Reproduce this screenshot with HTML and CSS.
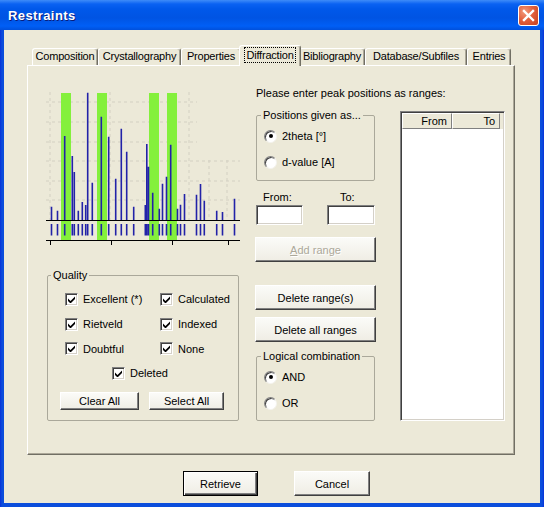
FILE: index.html
```html
<!DOCTYPE html>
<html lang="en">
<head>
    <meta charset="UTF-8">
    <title>Restraints</title>
    <link rel="stylesheet" href="styles.css">
</head>
<body>
    <div class="window">
        <div class="titlebar">
            <span class="title">Restraints</span>
            <span class="close">
                <svg width="13" height="13" viewBox="0 0 13 13"><path d="M2 2 L11 11 M11 2 L2 11" stroke="#fff" stroke-width="2.4" stroke-linecap="square"/></svg>
            </span>
        </div>
        <div class="client">
            <div class="tabs">
                <span class="tab t_comp">Composition</span>
                <span class="tab t_cryst">Crystallography</span>
                <span class="tab t_prop">Properties</span>
                <span class="tab active"><span class="focus">Diffraction</span></span>
                <span class="tab t_bib">Bibliography</span>
                <span class="tab t_db">Database/Subfiles</span>
                <span class="tab t_ent">Entries</span>
            </div>
            <div class="panel">
                <div class="left">
                    <svg class="chart" width="198" height="160" viewBox="44 88 198 160">
                        <g class="grid">
                            <path d="M50 92V220 M110 92V220 M189 92V220 M209 160V220 M227 160V220"/>
                            <path d="M46 102H197 M46 122H197 M46 142H197 M46 161H240 M46 181H240 M46 200H240"/>
                        </g>
                        <g fill="#84f03c">
                            <rect x="61" y="93" width="10" height="147"/>
                            <rect x="97" y="93" width="10" height="147"/>
                            <rect x="149" y="93" width="10" height="147"/>
                            <rect x="167" y="93" width="10" height="147"/>
                        </g>
                        <path class="peaks" d="M51.5 220V206.7 M57.5 220V210.7 M64.7 220V136 M72.3 220V156 M74.3 220V172 M78.3 220V210.7 M82.3 220V202 M85.7 220V205 M87.7 220V92.7 M92.3 220V182.7 M101.3 220V116.7 M108.7 220V136.7 M115.7 220V178.7 M121.3 220V128.7 M126.7 220V151.7 M133.7 220V206.7 M145.3 220V205 M146.8 220V144 M148.5 220V166.7 M152.7 220V192.7 M159.3 220V208.7 M162.5 220V183.7 M166.5 220V176.7 M170.7 220V144.7 M177.5 220V208.7 M180.5 220V204.7 M184.5 220V194 M196.5 220V194.7 M200.5 220V184 M204.3 220V200.7 M216.7 220V210.7 M222.5 220V212 M234.5 220V198.7"/>
                        <path class="peaks" d="M51.5 224V235.5 M57.5 224V235.5 M64.7 224V235.5 M72.3 224V235.5 M74.3 224V235.5 M78.3 224V235.5 M82.3 224V235.5 M85.7 224V235.5 M87.7 224V235.5 M92.3 224V235.5 M101.3 224V235.5 M108.7 224V235.5 M115.7 224V235.5 M121.3 224V235.5 M126.7 224V235.5 M133.7 224V235.5 M145.3 224V235.5 M146.8 224V235.5 M148.5 224V235.5 M152.7 224V235.5 M159.3 224V235.5 M162.5 224V235.5 M166.5 224V235.5 M170.7 224V235.5 M177.5 224V235.5 M180.5 224V235.5 M184.5 224V235.5 M196.5 224V235.5 M200.5 224V235.5 M204.3 224V235.5 M216.7 224V235.5 M222.5 224V235.5 M234.5 224V235.5"/>
                        <path class="axis" d="M46 220.5H240 M46 240.5H240 M50.5 240V245 M111.5 240V245 M172.5 240V245 M228.5 240V245"/>
                    </svg>
                    <fieldset class="group quality">
                        <legend>Quality</legend>
                        <div class="checks">
                            <label class="opt"><span class="cb"><svg width="7" height="7" viewBox="0 0 7 7"><polygon points="0,2.5 2.5,5 7,0.5 7,3 2.5,7.5 0,5"/></svg></span>Excellent (*)</label>
                            <label class="opt"><span class="cb"><svg width="7" height="7" viewBox="0 0 7 7"><polygon points="0,2.5 2.5,5 7,0.5 7,3 2.5,7.5 0,5"/></svg></span>Calculated</label>
                            <label class="opt"><span class="cb"><svg width="7" height="7" viewBox="0 0 7 7"><polygon points="0,2.5 2.5,5 7,0.5 7,3 2.5,7.5 0,5"/></svg></span>Rietveld</label>
                            <label class="opt"><span class="cb"><svg width="7" height="7" viewBox="0 0 7 7"><polygon points="0,2.5 2.5,5 7,0.5 7,3 2.5,7.5 0,5"/></svg></span>Indexed</label>
                            <label class="opt"><span class="cb"><svg width="7" height="7" viewBox="0 0 7 7"><polygon points="0,2.5 2.5,5 7,0.5 7,3 2.5,7.5 0,5"/></svg></span>Doubtful</label>
                            <label class="opt"><span class="cb"><svg width="7" height="7" viewBox="0 0 7 7"><polygon points="0,2.5 2.5,5 7,0.5 7,3 2.5,7.5 0,5"/></svg></span>None</label>
                            <label class="opt deleted"><span class="cb"><svg width="7" height="7" viewBox="0 0 7 7"><polygon points="0,2.5 2.5,5 7,0.5 7,3 2.5,7.5 0,5"/></svg></span>Deleted</label>
                        </div>
                        <div class="btnrow">
                            <button class="btn clear">Clear All</button>
                            <button class="btn select">Select All</button>
                        </div>
                    </fieldset>
                </div>
                <div class="right">
                    <p class="hint">Please enter peak positions as ranges:</p>
                    <div class="rrow">
                        <div class="mid">
                            <fieldset class="group">
                                <legend>Positions given as...</legend>
                                <div class="radios">
                                    <label class="opt"><span class="rb on"></span>2theta [°]</label>
                                    <label class="opt"><span class="rb"></span>d-value [A]</label>
                                </div>
                            </fieldset>
                            <div class="fromto">
                                <span class="lbl-from">From:</span>
                                <span class="lbl-to">To:</span>
                                <input class="field" type="text">
                                <input class="field" type="text">
                            </div>
                            <button class="btn wide add" disabled><u>A</u>dd range</button>
                            <button class="btn wide del">Delete range(s)</button>
                            <button class="btn wide delall">Delete all ranges</button>
                            <fieldset class="group logic">
                                <legend>Logical combination</legend>
                                <div class="radios">
                                    <label class="opt"><span class="rb on"></span>AND</label>
                                    <label class="opt"><span class="rb"></span>OR</label>
                                </div>
                            </fieldset>
                        </div>
                        <div class="list">
                            <div class="list_head">
                                <span class="col col_from">From</span>
                                <span class="col col_to">To</span>
                            </div>
                        </div>
                    </div>
                </div>
            </div>
            <div class="footer">
                <button class="btn default">Retrieve</button>
                <button class="btn cancel">Cancel</button>
            </div>
        </div>
    </div>
</body>
</html>
```

FILE: styles.css
```css
* {
    margin: 0;
    padding: 0;
    box-sizing: border-box;
}
body {
    width: 544px;
    height: 507px;
    overflow: hidden;
    font-family: "Liberation Sans", Arial, sans-serif;
    font-size: 11px;
    color: #000;
    background: #ece9d8;
}
.window {
    width: 544px;
    height: 507px;
    display: flex;
    flex-direction: column;
    background: linear-gradient(90deg, #0831d9 0, #0b4ddc 2px, #0b4ddc 542px, #0831d9 544px);
}
.titlebar {
    height: 30px;
    display: flex;
    align-items: center;
    justify-content: space-between;
    padding: 0 5px 0 8px;
    background: linear-gradient(#3e8cf8 0, #0a62f2 4px, #0058ea 9px, #0054e3 18px, #005ff6 26px, #0050dc 30px);
}
.title {
    color: #fff;
    font-weight: bold;
    font-size: 13px;
    letter-spacing: 0.4px;
    text-shadow: 1px 1px 0 #0a1c7a;
}
.close {
    width: 21px;
    height: 21px;
    margin-top: 1px;
    display: flex;
    align-items: center;
    justify-content: center;
    border: 1px solid #fff;
    border-radius: 3px;
    background: radial-gradient(circle at 30% 30%, #f39a7c 0, #e2613e 45%, #c6401c 100%);
}
.client {
    flex: 1;
    margin: 0 4px 4px;
    background: #ece9d8;
}

/* tabs */
.tabs {
    display: flex;
    align-items: flex-end;
    height: 20px;
    margin-top: 15px;
    padding-left: 28px;
}
.tab {
    height: 17px;
    line-height: 15px;
    text-align: center;
    border: 1px solid;
    border-bottom: none;
    border-color: #fff #716f64 transparent #fff;
    border-radius: 3px 3px 0 0;
    box-shadow: inset -1px 0 #aca899;
    background: #ece9d8;
    white-space: nowrap;
    letter-spacing: -0.2px;
}
.t_comp { width: 66px; }
.t_cryst { width: 83px; }
.t_prop { width: 60px; }
.t_bib { width: 66px; }
.t_db { width: 102px; }
.t_ent { width: 44px; }
.tab.active {
    position: relative;
    z-index: 1;
    width: 62px;
    height: 21px;
    margin: 0 -2px -1px;
    padding-top: 1px;
}
.focus {
    display: inline-block;
    line-height: 14px;
    padding: 0 1px;
    border: 1px dotted #000;
}

/* panel */
.panel {
    width: 488px;
    height: 390px;
    margin-left: 23px;
    display: flex;
    padding: 20px 0 0 16px;
    border: 1px solid;
    border-color: #fff #716f64 #716f64 #fff;
    box-shadow: inset -1px -1px #aca899;
}
.left {
    width: 198px;
}
.chart {
    display: block;
    margin-top: 2px;
}
.grid path {
    fill: none;
    stroke: #d3d0c2;
    stroke-width: 1;
    stroke-dasharray: 3 3;
}
.peaks {
    fill: none;
    stroke: #2222a8;
    stroke-width: 1.6;
}
.axis {
    fill: none;
    stroke: #000;
    stroke-width: 1;
}

/* group boxes */
.group {
    border: 1px solid #aaa89a;
    border-radius: 2px;
}
.group legend {
    line-height: 14px;
    padding: 0 2px;
    margin-left: 3px;
}
.quality {
    margin: 20px 3px 0;
    padding-bottom: 10px;
}
.checks {
    display: grid;
    grid-template-columns: 95px auto;
    grid-auto-rows: 24.7px;
    margin-top: 5px;
    padding-left: 17px;
}
.opt {
    display: flex;
    align-items: center;
    gap: 5px;
    white-space: nowrap;
}
.deleted {
    grid-column: span 2;
    margin-left: 47px;
}
.cb {
    width: 13px;
    height: 13px;
    flex: none;
    display: flex;
    align-items: center;
    justify-content: center;
    background: #fff;
    border: 1px solid;
    border-color: #808080 #fff #fff #808080;
    box-shadow: inset 1px 1px #404040, inset -1px -1px #d4d0c8;
}
.rb {
    width: 13px;
    height: 13px;
    flex: none;
    display: flex;
    align-items: center;
    justify-content: center;
    border-radius: 50%;
    background: #fff;
    border: 1px solid;
    border-color: #808080 #f4f3ee #f4f3ee #808080;
    box-shadow: inset 1px 1px #404040;
}
.rb.on::after {
    content: "";
    width: 4px;
    height: 4px;
    border-radius: 50%;
    background: #000;
}
.btnrow {
    display: flex;
    gap: 10px;
    margin-top: 6px;
    padding-left: 12px;
}

/* buttons */
.btn {
    height: 18px;
    font: inherit;
    color: #000;
    text-align: center;
    border: 1px solid;
    border-color: #fff #404040 #404040 #fff;
    box-shadow: inset -1px -1px #808080;
    background: linear-gradient(#fbfbf8, #efede4);
}
.clear {
    width: 79px;
}
.select {
    width: 75px;
}
.wide {
    width: 121px;
    height: 25px;
}
.add {
    margin-top: 12px;
    color: #aca899;
    text-shadow: 1px 1px 0 #fff;
}
.del {
    margin-top: 23px;
}
.delall {
    margin-top: 7px;
}

/* right side */
.right {
    margin-left: 13px;
}
.hint {
    line-height: 14px;
    margin-left: 1px;
}
.rrow {
    display: flex;
    align-items: flex-start;
    gap: 24px;
}
.mid {
    width: 121px;
    margin-top: 8px;
    display: flex;
    flex-direction: column;
}
.mid .group {
    margin: 0 1px;
    padding-bottom: 5px;
}
.mid .group legend {
    margin-left: 4px;
}
.radios {
    margin-top: 1px;
    padding-left: 7px;
}
.radios .opt {
    height: 26px;
}
.mid .logic {
    margin-top: 7px;
    padding-bottom: 4px;
}
.fromto {
    display: grid;
    grid-template-columns: 47px 48px;
    column-gap: 24px;
    margin: 9px 0 0 1px;
    line-height: 14px;
}
.lbl-from {
    padding-left: 7px;
}
.lbl-to {
    padding-left: 13px;
}
.field {
    height: 20px;
    margin-top: 1px;
    background: #fff;
    border: 1px solid;
    border-color: #808080 #fff #fff #808080;
    box-shadow: inset 1px 1px #404040, inset -1px -1px #d4d0c8;
}
.list {
    width: 105px;
    height: 310px;
    margin-top: 11px;
    background: #fff;
    border: 1px solid;
    border-color: #808080 #fff #fff #808080;
    box-shadow: inset 1px 1px #404040, inset -1px -1px #d4d0c8;
    padding: 1px;
}
.list_head {
    display: flex;
    height: 16px;
    background: #ece9d8;
}
.col {
    height: 16px;
    line-height: 14px;
    text-align: right;
    padding-right: 4px;
    border: 1px solid;
    border-color: #fff #808080 #808080 #fff;
}
.col_from {
    width: 50px;
}
.col_to {
    width: 48px;
}

/* footer */
.footer {
    display: flex;
    gap: 36px;
    margin-top: 16px;
    padding-left: 179px;
}
.footer .btn {
    height: 25px;
}
.default {
    width: 75px;
    border: 1px solid #000;
    box-shadow: inset 1px 1px #fff, inset -1px -1px #404040, inset -2px -2px #808080;
}
.cancel {
    width: 76px;
}
```
